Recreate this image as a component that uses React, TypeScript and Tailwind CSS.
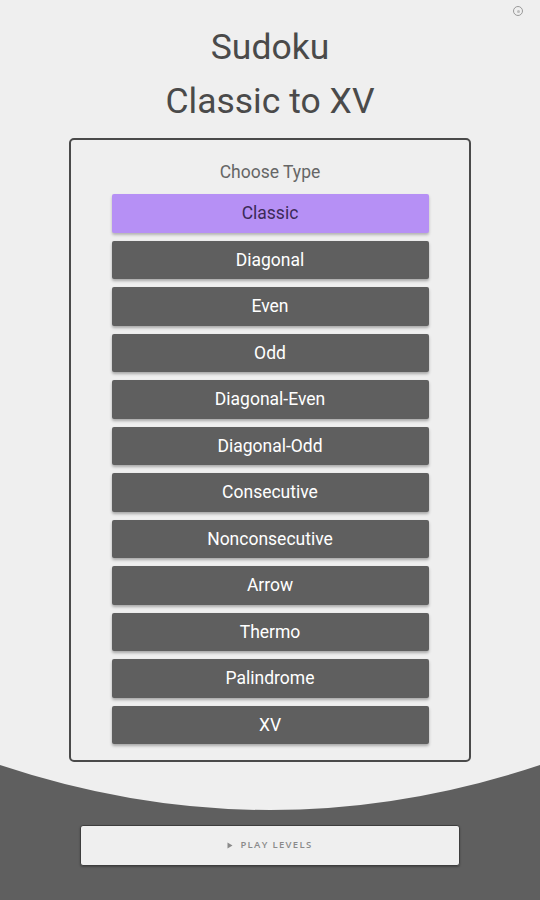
import React from 'react';

const types = [
  'Classic',
  'Diagonal',
  'Even',
  'Odd',
  'Diagonal-Even',
  'Diagonal-Odd',
  'Consecutive',
  'Nonconsecutive',
  'Arrow',
  'Thermo',
  'Palindrome',
  'XV',
];

const App: React.FC = () => {
  return (
    <div className="w-[540px] h-[900px] flex flex-col bg-[#5f5f5f] overflow-hidden font-['Roboto',sans-serif]">
      <div className="relative h-[765px] bg-[#efefef] pt-[20px]">
        {/* small status icon */}
        <div className="absolute top-[6px] right-[17px] w-[10px] h-[10px] rounded-full border-[1.5px] border-[#9a9a9a] flex items-center justify-center">
          <div className="w-[3px] h-[3px] rounded-full bg-[#bdbdbd]" />
        </div>

        <h1 className="text-center text-[35.5px] leading-[54px] text-[#4a4a4a]">
          Sudoku
          <br />
          Classic to XV
        </h1>

        <div className="mt-[10px] mx-auto w-[402px] border-2 border-[#4a4a4a] rounded-[5px] pt-[20px] pb-[16px]">
          <p className="text-center text-[17.5px] leading-[24px] text-[#666666] mb-[10px]">Choose Type</p>
          <div className="flex flex-col gap-[8px] items-center">
            {types.map((t, i) => (
              <button
                key={t}
                className={
                  i === 0
                    ? 'w-[317px] h-[38.5px] bg-[#b690f5] text-[#3b2a58] text-[17.5px] rounded-[2px] shadow-[0_2px_3px_rgba(0,0,0,0.25)]'
                    : 'w-[317px] h-[38.5px] bg-[#5f5f5f] text-white text-[17.5px] rounded-[2px] shadow-[0_2px_3px_rgba(0,0,0,0.3)]'
                }
              >
                {t}
              </button>
            ))}
          </div>
        </div>
      </div>

      <svg width="540" height="45" viewBox="0 0 540 45" className="block shrink-0">
        <path d="M0 0 L540 0 Q270 90 0 0 Z" fill="#efefef" />
      </svg>

      <div className="mt-[15px] mx-auto w-[380px] h-[41px] bg-[#efefef] border border-[#3e3e3e] rounded-[3px] flex items-center justify-center gap-[7px] shadow-[0_1px_2px_rgba(0,0,0,0.3)]">
        <svg width="6" height="7" viewBox="0 0 6 7">
          <path d="M0.5 0.5 L5.5 3.5 L0.5 6.5 Z" fill="#8a8a8a" />
        </svg>
        <span className="text-[9.5px] font-semibold tracking-[0.14em] text-[#8a8a8a] font-['Open_Sans',sans-serif]">
          PLAY LEVELS
        </span>
      </div>
    </div>
  );
};

export default App;
